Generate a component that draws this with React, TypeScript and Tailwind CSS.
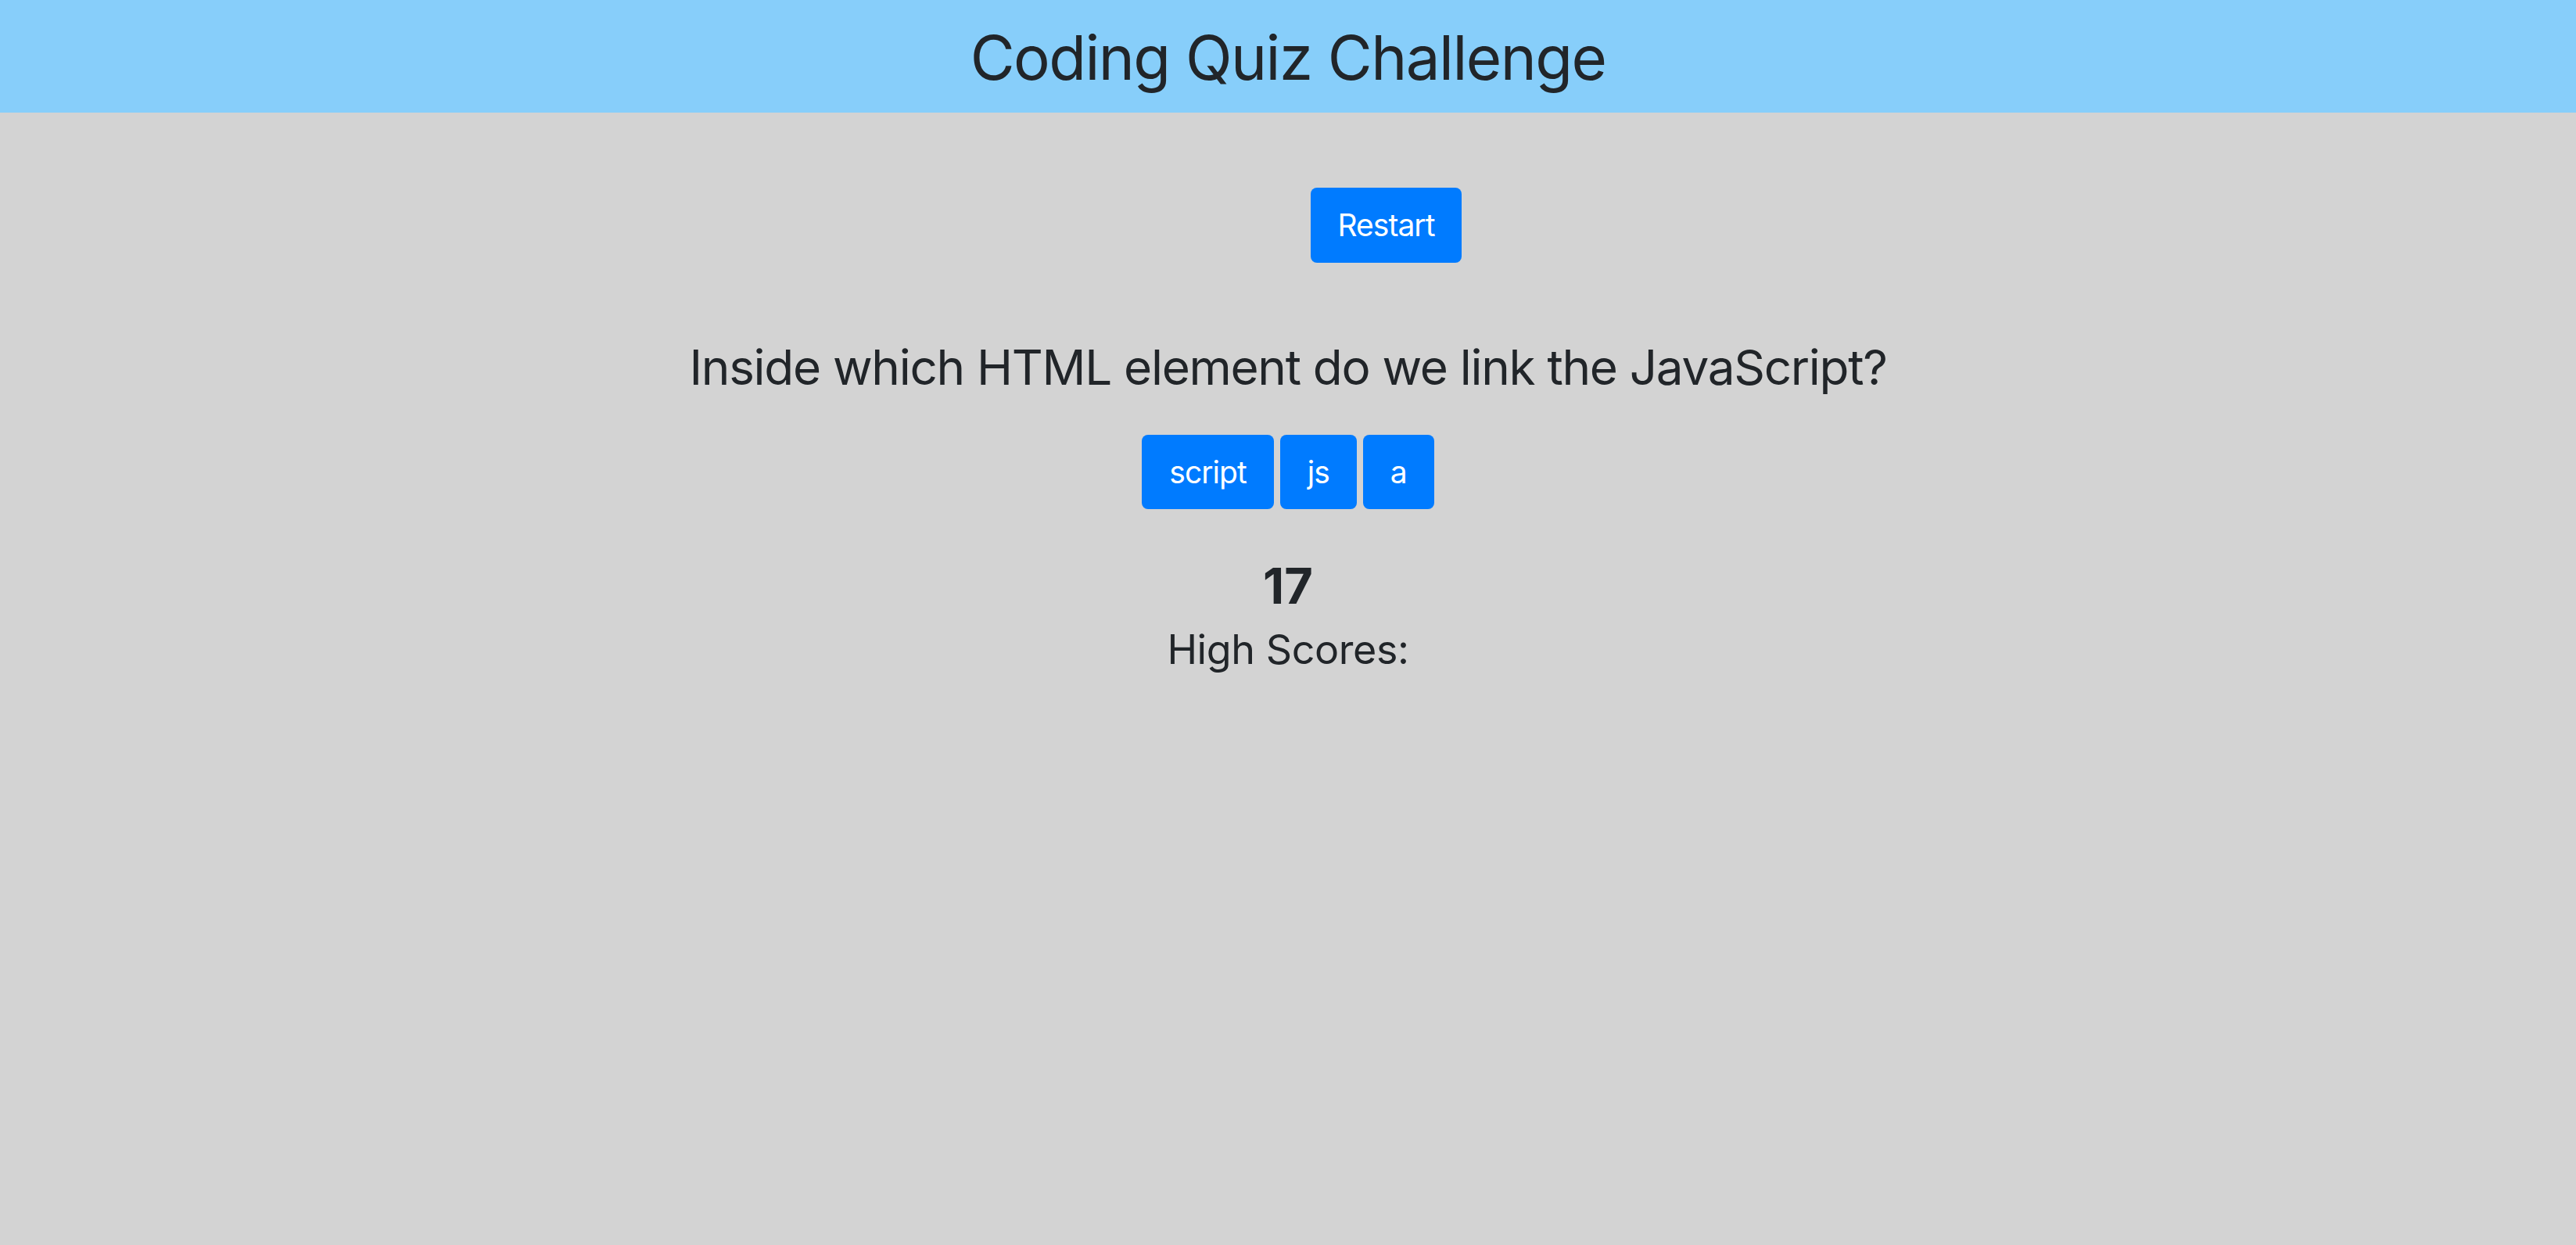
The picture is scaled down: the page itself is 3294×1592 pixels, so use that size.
import { useState } from 'react';

const QUESTION = {
  title: 'Inside which HTML element do we link the JavaScript?',
  choices: ['script', 'js', 'a'],
};

export default function App() {
  const [score] = useState(17);

  return (
    <div className="min-h-screen bg-[#d3d3d3] text-[#212529] font-['Inter',sans-serif]">
      <header className="h-[144px] bg-[#87cefa] flex justify-center pt-[34px]">
        <h1 className="text-[78px] leading-[80px] font-normal tracking-[-0.02em]">Coding Quiz Challenge</h1>
      </header>

      <main className="flex flex-col items-center">
        <div className="mt-[96px] flex justify-center w-full">
          <button className="ml-[251px] h-[96px] px-[35px] rounded-[8px] bg-[#007bff] text-white text-[39px] leading-[48px] tracking-[-0.025em]">
            Restart
          </button>
        </div>

        <h2 className="mt-[94px] text-[62px] leading-[80px] font-normal tracking-[-0.021em]">
          {QUESTION.title}
        </h2>

        <div className="mt-[46px] flex gap-[8px]">
          {QUESTION.choices.map((choice) => (
            <button
              key={choice}
              className="h-[95px] px-[35px] rounded-[8px] bg-[#007bff] text-white text-[39px] leading-[48px] tracking-[-0.025em]"
            >
              {choice}
            </button>
          ))}
        </div>

        <div className="mt-[58px] text-[63px] leading-[80px] font-bold">{score}</div>
        <div className="mt-[12px] text-[52px] leading-[60px] tracking-[-0.008em]">High Scores:</div>
      </main>
    </div>
  );
}
